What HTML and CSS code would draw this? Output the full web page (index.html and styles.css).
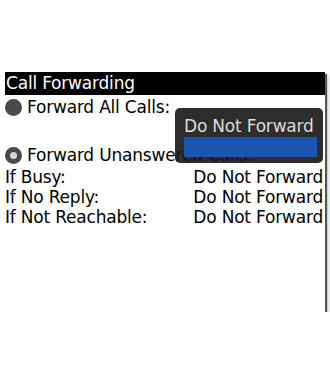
FILE: index.html
```html
<!DOCTYPE html>
<html lang="en">
<head>
    <meta charset="UTF-8">
    <meta name="viewport" content="width=device-width, initial-scale=1.0">
    <title>Call Forwarding</title>
    <link rel="stylesheet" href="styles.css">
</head>
<body>
    <div class="screen">
        <div class="title">Call Forwarding</div>

        <div class="row radio-row">
            <span class="radio"></span>
            <span>Forward All Calls:</span>
        </div>
        <!-- choice field sits under the open popup -->
        <div class="row choice-row"></div>
        <div class="row radio-row">
            <span class="radio selected"></span>
            <span>Forward Unanswered Calls:</span>
        </div>

        <div class="row line">
            <span>If Busy:</span>
            <span class="value">Do Not Forward</span>
        </div>
        <div class="row line">
            <span>If No Reply:</span>
            <span class="value">Do Not Forward</span>
        </div>
        <div class="row line">
            <span>If Not Reachable:</span>
            <span class="value">Do Not Forward</span>
        </div>

        <div class="popup">
            <div class="popup-item">Do Not Forward</div>
            <div class="popup-focus"></div>
        </div>
    </div>
</body>
</html>
```

FILE: styles.css
```css
body {
    margin: 0;
    background: #fff;
    font-family: "DejaVu Sans", Verdana, sans-serif;
    font-size: 17px;
    letter-spacing: -0.2px;
    color: #000;
}
.screen {
    position: relative;
    width: 320px;
    height: 240px;
    margin: 72px 0 0 5px;
    background: #fff;
    box-shadow: 2px 2px 0 #555, 3px 3px 3px rgba(0, 0, 0, 0.3);
}
.title {
    height: 23px;
    line-height: 22px;
    padding-left: 1px;
    background: #000;
    color: #fff;
}
.row {
    display: flex;
    align-items: center;
    white-space: nowrap;
    line-height: 20px;
}
.radio-row {
    height: 24px;
}
.choice-row {
    height: 24px;
}
.line {
    height: 20px;
    justify-content: space-between;
    padding-right: 2px;
}
.radio {
    width: 17px;
    height: 17px;
    margin: 0 5px 0 0;
    border-radius: 50%;
    background: #4a4a4a;
    display: flex;
    align-items: center;
    justify-content: center;
    flex-shrink: 0;
}
.radio.selected::after {
    content: "";
    width: 7px;
    height: 7px;
    border-radius: 50%;
    background: #d8d8d8;
}
.popup {
    position: absolute;
    left: 170px;
    top: 36px;
    width: 148px;
    height: 55px;
    box-sizing: border-box;
    padding: 8px 6px 6px 9px;
    background: rgba(22, 22, 22, 0.9);
    border-radius: 5px;
}
.popup-item {
    height: 20px;
    line-height: 20px;
    color: #dcdcdc;
    white-space: nowrap;
}
.popup-focus {
    width: 133px;
    height: 20px;
    margin-top: 1px;
    background: #1a55b0;
}
```
